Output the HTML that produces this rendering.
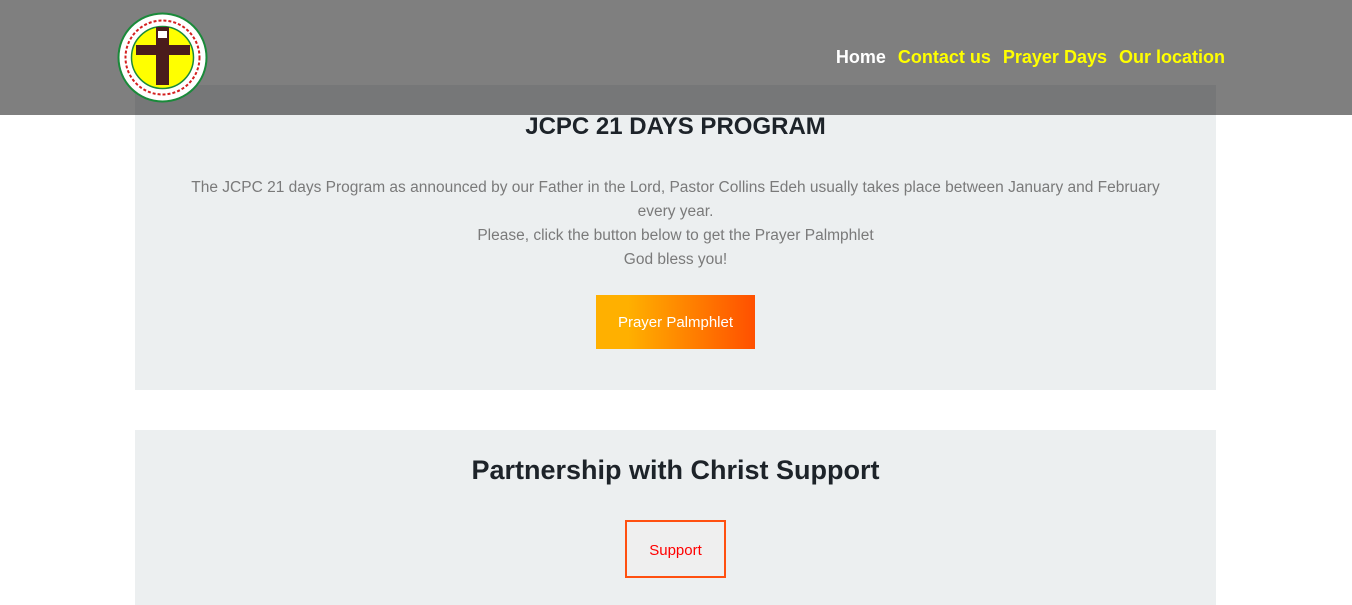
<!DOCTYPE html>
<html><head><style>
body{margin:0;width:1352px;height:605px;overflow:hidden;background:#fff;font-family:"Liberation Sans",sans-serif;position:relative}
.box{position:absolute;left:135px;width:1081px;background:#eceff0;text-align:center}
h2{margin:0;font-weight:bold;color:#1d2329;position:absolute;left:0;right:0}
p{margin:0;position:absolute;left:0;right:0;color:#7a7a7a;font-size:15.5px;line-height:24px}
header{position:absolute;left:0;top:0;width:1352px;height:115px;background:rgba(0,0,0,0.5)}
nav{position:absolute;right:127px;top:47px;font-size:18px;font-weight:bold}
nav span{margin-left:12px;color:#ffff00}
</style></head><body>
<div class="box" style="top:85px;height:305px">
<h2 style="top:28px;font-size:24px">JCPC 21 DAYS PROGRAM</h2>
<p style="top:91px;padding:0 50px">The JCPC 21 days Program as announced by our Father in the Lord, Pastor Collins Edeh usually takes place between January and February every year.<br>Please, click the button below to get the Prayer Palmphlet<br>God bless you!</p>
<div style="position:absolute;left:461px;top:210px;width:159px;height:54px;background:linear-gradient(90deg,#ffb000 20%,#ff5000);color:#fff;font-size:15px;line-height:56px">Prayer Palmphlet</div>
</div>
<div class="box" style="top:430px;height:175px">
<h2 style="top:25px;font-size:27px">Partnership with Christ Support</h2>
<div style="position:absolute;left:490px;top:90px;width:97px;height:54px;border:2px solid #ff5010;background:#efefef;color:#f00;font-size:15px;line-height:58px">Support</div>
</div>
<header>
<svg style="position:absolute;left:117px;top:12px" width="91" height="91" viewBox="0 0 91 91">
<circle cx="45.5" cy="45.5" r="45" fill="#1a8a3a"/><circle cx="45.5" cy="45.5" r="43" fill="#fff"/>
<circle cx="45.5" cy="45.5" r="37" fill="none" stroke="#d42020" stroke-width="2" stroke-dasharray="3 2"/>
<circle cx="45.5" cy="45.5" r="31" fill="#ffff00" stroke="#1a8a3a" stroke-width="1.5"/>
<rect x="39" y="15" width="13" height="58" fill="#4a1c1c"/><rect x="19" y="33" width="54" height="10" fill="#4a1c1c"/>
<rect x="41" y="19" width="9" height="7" fill="#fff"/>
</svg>
<nav><span style="color:#fff">Home</span><span>Contact us</span><span>Prayer Days</span><span>Our location</span></nav>
</header>
</body></html>
